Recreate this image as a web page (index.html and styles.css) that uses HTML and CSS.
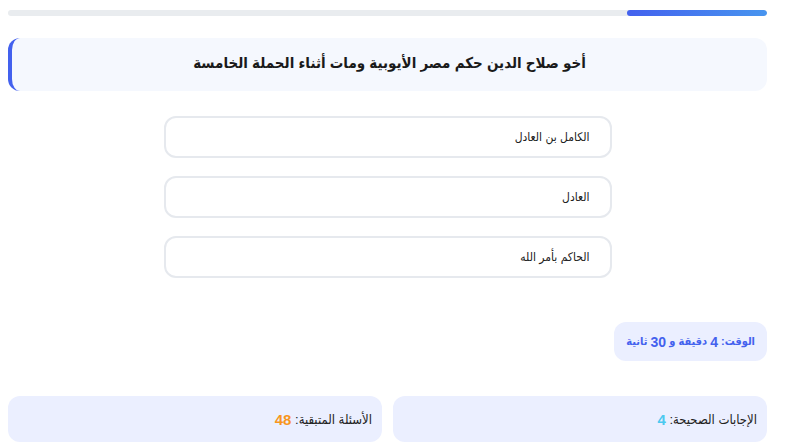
FILE: index.html
```html
<!DOCTYPE html>
<html lang="ar" dir="rtl">
<head>
<meta charset="utf-8">
<link rel="stylesheet" href="styles.css">
</head>
<body>
<div class="page">
  <div class="progress"><div class="progress-fill" style="width:18.4%"></div></div>
  <div class="question">أخو صلاح الدين حكم مصر الأيوبية ومات أثناء الحملة الخامسة</div>
  <div class="options">
    <div class="option">الكامل بن العادل</div>
    <div class="option">العادل</div>
    <div class="option">الحاكم بأمر الله</div>
  </div>
  <div class="timer-row"><div class="timer">الوقت: <span class="digit">4</span> دقيقة و <span class="digit">30</span> ثانية</div></div>
  <div class="stats">
    <div class="stat">الإجابات الصحيحة: <b class="num-correct">4</b></div>
    <div class="stat">الأسئلة المتبقية: <b class="num-left">48</b></div>
  </div>
</div>
</body>
</html>
```
FILE: styles.css
```css
html, body { margin: 0; padding: 0; background: #fff; }
body {
  font-family: "Liberation Sans", "DejaVu Sans Condensed", sans-serif;
  color: #222;
  padding: 10px 18px 0 8px;
}
.page { width: 759px; display: flex; flex-direction: column; }
.progress {
  height: 6px;
  background: #e9ecef;
  border-radius: 4px;
  overflow: hidden;
  display: flex;
}
.progress-fill {
  height: 100%;
  border-radius: 4px;
  background: linear-gradient(to right, #4361ee, #4895ef);
}
.question {
  margin-top: 22px;
  height: 53px;
  box-sizing: border-box;
  background: #f5f8fe;
  border-radius: 12px;
  border-left: 4px solid #4361ee;
  display: flex;
  align-items: center;
  justify-content: center;
  padding-bottom: 3px;
  font-size: 15px;
  font-weight: bold;
  color: #1a1a1a;
}
.options {
  margin-top: 25px;
  display: flex;
  flex-direction: column;
  gap: 18px;
  align-items: center;
}
.option {
  width: 448px;
  height: 42px;
  box-sizing: border-box;
  border: 2px solid #e6e9ee;
  border-radius: 12px;
  display: flex;
  align-items: center;
  padding-right: 20px;
  font-size: 12px;
  color: #222;
}
.timer-row { margin-top: 44px; display: flex; }
.timer {
  height: 39px;
  padding: 0 12px;
  box-sizing: border-box;
  background: #ebefff;
  border-radius: 12px;
  display: flex;
  align-items: center;
  white-space: pre;
  font-size: 11px;
  font-weight: bold;
  color: #4361ee;
}
.digit { font-size: 14px; }
.stats {
  margin-top: 35px;
  display: grid;
  grid-template-columns: 1fr 1fr;
  gap: 11px;
}
.stat {
  height: 46px;
  box-sizing: border-box;
  background: #ebefff;
  border-radius: 12px;
  display: flex;
  align-items: center;
  white-space: pre;
  padding-right: 10px;
  font-size: 13px;
  color: #222;
}
.stat b { font-size: 15px; }
.num-correct { color: #4cc9f0; }
.num-left { color: #f8961e; }
```
